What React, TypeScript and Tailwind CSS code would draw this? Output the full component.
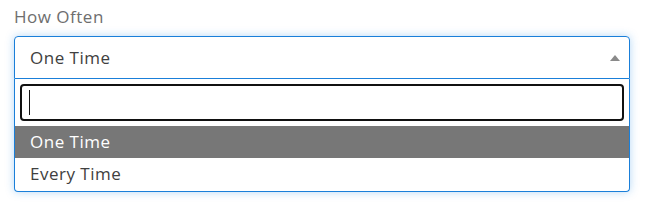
export default function App() {
  const options = ["One Time", "Every Time"];
  const selected = "One Time";

  return (
    <div className="min-h-[215px] bg-white px-[14px] pt-[6px] font-['Open_Sans',sans-serif] tracking-[0.5px]">
      <label className="block text-[17px] leading-[22px] text-[#6e6e6e]">How Often</label>

      <div className="mt-[8px] w-[616px] rounded-[4px] shadow-[0_0_8px_rgba(40,140,230,0.35)]">
        {/* Select box */}
        <div className="flex h-[43px] items-center justify-between rounded-t-[4px] border border-[#1a7fd9] pl-[15px] pr-[8px]">
          <span className="text-[17px] text-[#404040]">{selected}</span>
          <svg width="10" height="6" viewBox="0 0 10 6" className="mr-[1px]">
            <path d="M0 6 L5 0 L10 6 Z" fill="#8a8a8a" />
          </svg>
        </div>

        {/* Dropdown */}
        <div className="rounded-b-[4px] border border-t-0 border-[#1a7fd9] bg-white pb-[1px]">
          <div className="px-[5px] py-[5px]">
            <div className="relative">
              <input className="h-[37px] w-full rounded-[4px] border-2 border-[#111] px-[8px] text-[17px] outline-none" />
              <span className="pointer-events-none absolute left-[9px] top-[6px] h-[25px] w-[1px] bg-[#111]" />
            </div>
          </div>
          {options.map((opt) => (
            <div
              key={opt}
              className={`flex h-[32px] items-center px-[15px] text-[17px] ${
                opt === selected ? "bg-[#777777] text-white" : "text-[#404040]"
              }`}
            >
              {opt}
            </div>
          ))}
        </div>
      </div>
    </div>
  );
}
